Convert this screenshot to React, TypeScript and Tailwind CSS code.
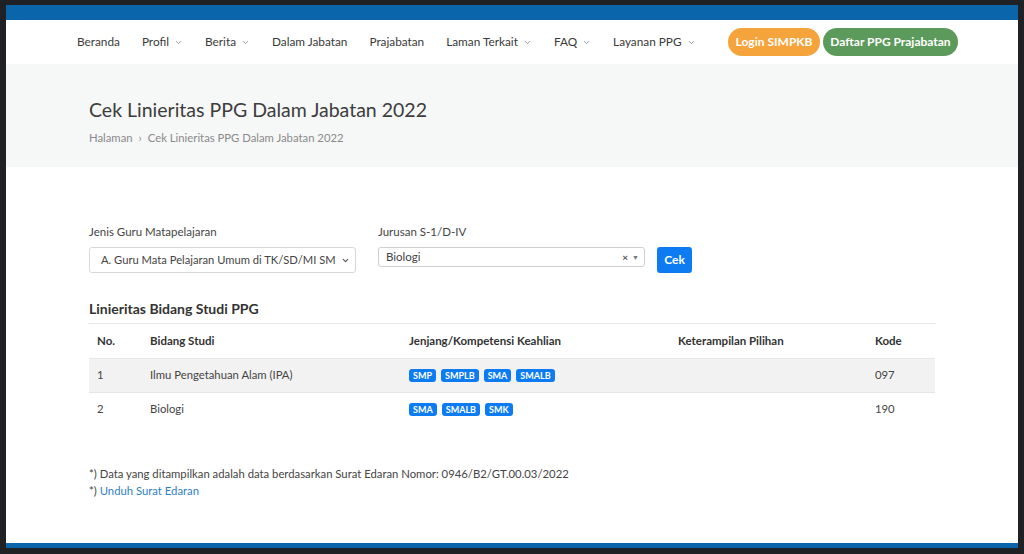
import { ChevronDown } from 'lucide-react';

const navItems = [
  { label: 'Beranda', drop: false },
  { label: 'Profil', drop: true },
  { label: 'Berita', drop: true },
  { label: 'Dalam Jabatan', drop: false },
  { label: 'Prajabatan', drop: false },
  { label: 'Laman Terkait', drop: true },
  { label: 'FAQ', drop: true },
  { label: 'Layanan PPG', drop: true },
];

const rows = [
  { no: '1', bidang: 'Ilmu Pengetahuan Alam (IPA)', jenjang: ['SMP', 'SMPLB', 'SMA', 'SMALB'], kode: '097' },
  { no: '2', bidang: 'Biologi', jenjang: ['SMA', 'SMALB', 'SMK'], kode: '190' },
];

const App = () => {
  return (
    <div className="h-[554px] bg-[#202124] px-[6px] pt-[5px] pb-[6px] font-['Lato',sans-serif] text-[#444]">
      <div className="h-full flex flex-col bg-white overflow-hidden">
        {/* Top bar */}
        <div className="h-[15px] bg-[#0b65ab]"></div>

        {/* Navbar */}
        <div className="h-[44px] flex items-center pl-[71px] whitespace-nowrap">
          <nav className="flex items-center gap-[22px] text-[11.8px] text-[#3a3a3a] shrink-0">
            {navItems.map((item) => (
              <span key={item.label} className="flex items-center gap-[5px]">
                {item.label}
                {item.drop && <ChevronDown size={9} strokeWidth={2} className="text-[#777]" />}
              </span>
            ))}
          </nav>
          <div className="flex items-center gap-[3px] ml-auto mr-[60px] shrink-0">
            <span className="h-[28px] w-[92px] flex items-center justify-center rounded-full bg-[#f5a33b] text-white text-[12px] font-bold">
              Login SIMPKB
            </span>
            <span className="h-[28px] w-[135px] flex items-center justify-center rounded-full bg-[#5c9a5b] text-white text-[12px] font-bold">
              Daftar PPG Prajabatan
            </span>
          </div>
        </div>

        {/* Page header */}
        <div className="h-[103px] bg-[#f6f7f7] pl-[83px] pt-[33px]">
          <h1 className="text-[19.5px] leading-[26px] text-[#3d3d3d]">Cek Linieritas PPG Dalam Jabatan 2022</h1>
          <div className="mt-[7px] text-[11.3px] text-[#8a8a8a] flex items-center gap-[6px]">
            <span>Halaman</span>
            <span>›</span>
            <span>Cek Linieritas PPG Dalam Jabatan 2022</span>
          </div>
        </div>

        {/* Content */}
        <div className="pl-[83px] pr-[83px] pt-[57px]">
          <div className="flex items-start">
            <div className="w-[267px]">
              <div className="text-[11.5px] leading-[16px] text-[#444]">Jenis Guru Matapelajaran</div>
              <div className="mt-[7px] h-[26px] border border-[#d8d8d8] rounded-[3px] flex items-center justify-between pl-[11px] pr-[5px] text-[11.2px] text-[#444] whitespace-nowrap">
                <span>A. Guru Mata Pelajaran Umum di TK/SD/MI SM</span>
                <ChevronDown size={9} strokeWidth={3} className="text-[#555] shrink-0" />
              </div>
            </div>
            <div className="w-[267px] ml-[22px]">
              <div className="text-[11.5px] leading-[16px] text-[#444]">Jurusan S-1/D-IV</div>
              <div className="mt-[7px] h-[20px] border border-[#cfcfcf] rounded-[3px] flex items-center justify-between pl-[7px] pr-[5px] text-[11.5px] text-[#444]">
                <span>Biologi</span>
                <span className="flex items-center gap-[4px] text-[#777]">
                  <span className="text-[10px] font-bold text-[#555]">×</span>
                  <span className="text-[7px]">▼</span>
                </span>
              </div>
            </div>
            <div className="ml-[12px] mt-[23px] h-[26px] w-[35px] rounded-[3px] bg-[#0d7cf2] text-white text-[12px] font-bold flex items-center justify-center">
              Cek
            </div>
          </div>

          <h2 className="mt-[27px] text-[14px] font-bold text-[#333] leading-[18px]">Linieritas Bidang Studi PPG</h2>

          <table className="mt-[5px] w-full text-[11.3px] border-collapse">
            <thead>
              <tr className="h-[35px] border-t border-[#e6e6e6] text-left text-[#333]">
                <th className="pl-[8px] w-[61px] font-bold text-[11.5px]">No.</th>
                <th className="w-[259px] font-bold text-[11.5px]">Bidang Studi</th>
                <th className="w-[269px] font-bold text-[11.5px]">Jenjang/Kompetensi Keahlian</th>
                <th className="w-[197px] font-bold text-[11.5px]">Keterampilan Pilihan</th>
                <th className="font-bold text-[11.5px]">Kode</th>
              </tr>
            </thead>
            <tbody>
              {rows.map((r, i) => (
                <tr key={r.no} className={`h-[34px] border-t border-[#e6e6e6] ${i === 0 ? 'bg-[#f2f2f2]' : ''}`}>
                  <td className="pl-[8px]">{r.no}</td>
                  <td>{r.bidang}</td>
                  <td>
                    <div className="flex gap-[5px]">
                      {r.jenjang.map((j) => (
                        <span key={j} className="h-[13px] px-[4px] rounded-[3px] bg-[#0d7cf2] text-white text-[9px] font-bold leading-[13px]">
                          {j}
                        </span>
                      ))}
                    </div>
                  </td>
                  <td></td>
                  <td>{r.kode}</td>
                </tr>
              ))}
            </tbody>
          </table>

          <div className="mt-[38px] text-[11.3px] leading-[17px] text-[#444]">
            <div>*) Data yang ditampilkan adalah data berdasarkan Surat Edaran Nomor: 0946/B2/GT.00.03/2022</div>
            <div>
              *) <span className="text-[#2f7fc4]">Unduh Surat Edaran</span>
            </div>
          </div>
        </div>

        <div className="mt-auto h-[5px] bg-[#0b65ab]"></div>
      </div>
    </div>
  );
};

export default App;
